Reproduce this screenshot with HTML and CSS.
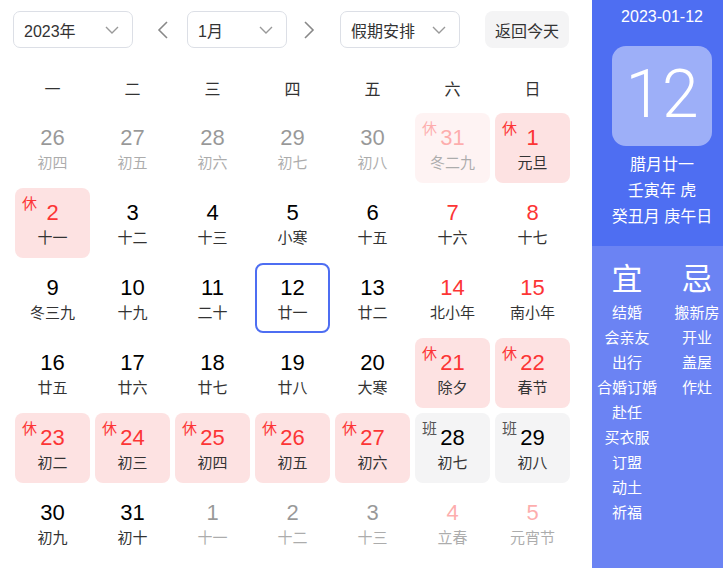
FILE: index.html
```html
<!DOCTYPE html>
<html lang="zh-CN">
<head>
  <meta charset="UTF-8" />
  <meta name="viewport" content="width=device-width, initial-scale=1.0"/>
  <title>万年历</title>
  <link rel="stylesheet" href="styles.css">
</head>
<body>
  <div class="app">
    <div class="main">
      <div class="toolbar">
        <div class="select year-select">
          <span>2023年</span>
          <svg class="chev" width="14" height="8" viewBox="0 0 14 8"><polyline points="1,1 7,7 13,1" fill="none" stroke="#999" stroke-width="1.4"/></svg>
        </div>
        <span class="arrow prev">
          <svg width="12" height="18" viewBox="0 0 12 18"><polyline points="10,1 2,9 10,17" fill="none" stroke="#888" stroke-width="1.6"/></svg>
        </span>
        <div class="select month-select">
          <span>1月</span>
          <svg class="chev" width="14" height="8" viewBox="0 0 14 8"><polyline points="1,1 7,7 13,1" fill="none" stroke="#999" stroke-width="1.4"/></svg>
        </div>
        <span class="arrow next">
          <svg width="12" height="18" viewBox="0 0 12 18"><polyline points="2,1 10,9 2,17" fill="none" stroke="#888" stroke-width="1.6"/></svg>
        </span>
        <div class="select holiday-select">
          <span>假期安排</span>
          <svg class="chev" width="14" height="8" viewBox="0 0 14 8"><polyline points="1,1 7,7 13,1" fill="none" stroke="#999" stroke-width="1.4"/></svg>
        </div>
        <button class="today-btn">返回今天</button>
      </div>

      <div class="weekdays">
        <span>一</span><span>二</span><span>三</span><span>四</span><span>五</span><span>六</span><span>日</span>
      </div>

      <div class="days" id="days"></div>
    </div>

    <div class="side">
      <div class="side-top">
        <div class="side-date">2023-01-12</div>
        <div class="big-day">12</div>
        <div class="lunar-info">
          <div>腊月廿一</div>
          <div>壬寅年 虎</div>
          <div>癸丑月 庚午日</div>
        </div>
      </div>
      <div class="side-bottom">
        <div class="col">
          <div class="col-title">宜</div>
          <div>结婚</div><div>会亲友</div><div>出行</div><div>合婚订婚</div><div>赴任</div>
          <div>买衣服</div><div>订盟</div><div>动土</div><div>祈福</div>
        </div>
        <div class="col">
          <div class="col-title">忌</div>
          <div>搬新房</div><div>开业</div><div>盖屋</div><div>作灶</div>
        </div>
      </div>
    </div>
  </div>

  <script>
    // d: day, l: lunar, o: other month, r: rest, w: work, k: weekend, s: selected
    const days = [
      {d:26,l:'初四',o:1},{d:27,l:'初五',o:1},{d:28,l:'初六',o:1},{d:29,l:'初七',o:1},{d:30,l:'初八',o:1},{d:31,l:'冬二九',o:1,r:1,k:1},{d:1,l:'元旦',r:1,k:1},
      {d:2,l:'十一',r:1},{d:3,l:'十二'},{d:4,l:'十三'},{d:5,l:'小寒'},{d:6,l:'十五'},{d:7,l:'十六',k:1},{d:8,l:'十七',k:1},
      {d:9,l:'冬三九'},{d:10,l:'十九'},{d:11,l:'二十'},{d:12,l:'廿一',s:1},{d:13,l:'廿二'},{d:14,l:'北小年',k:1},{d:15,l:'南小年',k:1},
      {d:16,l:'廿五'},{d:17,l:'廿六'},{d:18,l:'廿七'},{d:19,l:'廿八'},{d:20,l:'大寒'},{d:21,l:'除夕',r:1,k:1},{d:22,l:'春节',r:1,k:1},
      {d:23,l:'初二',r:1},{d:24,l:'初三',r:1},{d:25,l:'初四',r:1},{d:26,l:'初五',r:1},{d:27,l:'初六',r:1},{d:28,l:'初七',w:1},{d:29,l:'初八',w:1},
      {d:30,l:'初九'},{d:31,l:'初十'},{d:1,l:'十一',o:1},{d:2,l:'十二',o:1},{d:3,l:'十三',o:1},{d:4,l:'立春',o:1,k:1},{d:5,l:'元宵节',o:1,k:1}
    ];

    const box = document.getElementById('days');
    days.forEach(item => {
      let cls = 'day';
      if (item.o) cls += ' other';
      if (item.r) cls += ' rest';
      if (item.w) cls += ' work';
      if (item.k && !item.w) cls += ' weekend';
      if (item.s) cls += ' selected';
      let tag = '';
      if (item.r) tag = '<span class="tag">休</span>';
      if (item.w) tag = '<span class="tag">班</span>';
      box.innerHTML += `<div class="${cls}">${tag}<span class="num">${item.d}</span><span class="lunar">${item.l}</span></div>`;
    });
  </script>
</body>
</html>
```

FILE: styles.css
```css
body {
  margin: 0;
  font-family: "Liberation Sans", "Noto Sans CJK SC", sans-serif;
  color: #333;
  background: #fff;
  overflow: hidden;
}

.app {
  display: flex;
  width: 732px;
  height: 568px;
}

.main {
  width: 592px;
  flex-shrink: 0;
  padding: 11px 0 0 13px;
  box-sizing: border-box;
}

/* toolbar */
.toolbar {
  display: flex;
  align-items: center;
  height: 37px;
}

.select {
  height: 37px;
  box-sizing: border-box;
  border: 1px solid #dcdfe6;
  border-radius: 7px;
  display: flex;
  align-items: center;
  justify-content: space-between;
  padding: 0 13px 0 10px;
  font-size: 16px;
  color: #333;
}

.year-select { width: 120px; }
.month-select { width: 100px; }
.holiday-select { width: 120px; }

.arrow {
  width: 24px;
  display: flex;
  justify-content: center;
}

.prev { margin: 0 12px 0 18px; }
.next { margin: 0 19px 0 10px; }

.today-btn {
  margin-left: 25px;
  width: 84px;
  height: 37px;
  border: none;
  border-radius: 8px;
  background: #f4f4f5;
  color: #333;
  font-family: inherit;
  font-size: 16px;
  padding: 0;
}

/* calendar */
.weekdays {
  display: grid;
  grid-template-columns: repeat(7, 75px);
  column-gap: 5px;
  margin: 20px 0 0 2px;
  height: 40px;
  align-items: center;
  text-align: center;
  font-size: 16px;
  color: #333;
}

.days {
  display: grid;
  grid-template-columns: repeat(7, 75px);
  grid-auto-rows: 70px;
  gap: 5px;
  margin: 5px 0 0 2px;
}

.day {
  position: relative;
  box-sizing: border-box;
  border: 2px solid transparent;
  border-radius: 8px;
  display: flex;
  flex-direction: column;
  align-items: center;
  padding-top: 9px;
}

.num {
  font-size: 22px;
  line-height: 28px;
  color: #000;
}

.lunar {
  font-size: 15px;
  line-height: 20px;
  margin-top: 1px;
  color: #333;
}

.tag {
  position: absolute;
  left: 5px;
  top: 5px;
  font-size: 15px;
  line-height: 18px;
  color: #fc3535;
}

.weekend .num { color: #fc3535; }

.rest { background: #fde2e2; }
.rest .num { color: #fc3535; }

.work { background: #f4f4f5; }
.work .tag { color: #555; }

.other { opacity: 0.4; }

.selected { border-color: #4e6ef2; }

/* side panel */
.side {
  width: 140px;
  flex-shrink: 0;
  color: #fff;
  display: flex;
  flex-direction: column;
}

.side-top {
  background: #4e6ef2;
  height: 246px;
  box-sizing: border-box;
  padding-top: 5px;
  display: flex;
  flex-direction: column;
  align-items: center;
}

.side-date {
  font-size: 16px;
  line-height: 24px;
}

.big-day {
  margin-top: 17px;
  width: 100px;
  height: 100px;
  border-radius: 14px;
  background: rgba(255, 255, 255, 0.45);
  display: flex;
  align-items: center;
  justify-content: center;
  font-family: Roboto, "Liberation Sans", sans-serif;
  font-weight: 300;
  font-size: 66px;
  padding-bottom: 3px;
  box-sizing: border-box;
}

.lunar-info {
  margin-top: 6px;
  font-size: 16px;
  line-height: 26px;
  text-align: center;
}

.side-bottom {
  flex: 1;
  background: #6b83f3;
  display: flex;
  padding-top: 14px;
}

.col {
  width: 70px;
  text-align: center;
  font-size: 15px;
  line-height: 25px;
}

.col-title {
  font-size: 31px;
  line-height: 40px;
}
```
